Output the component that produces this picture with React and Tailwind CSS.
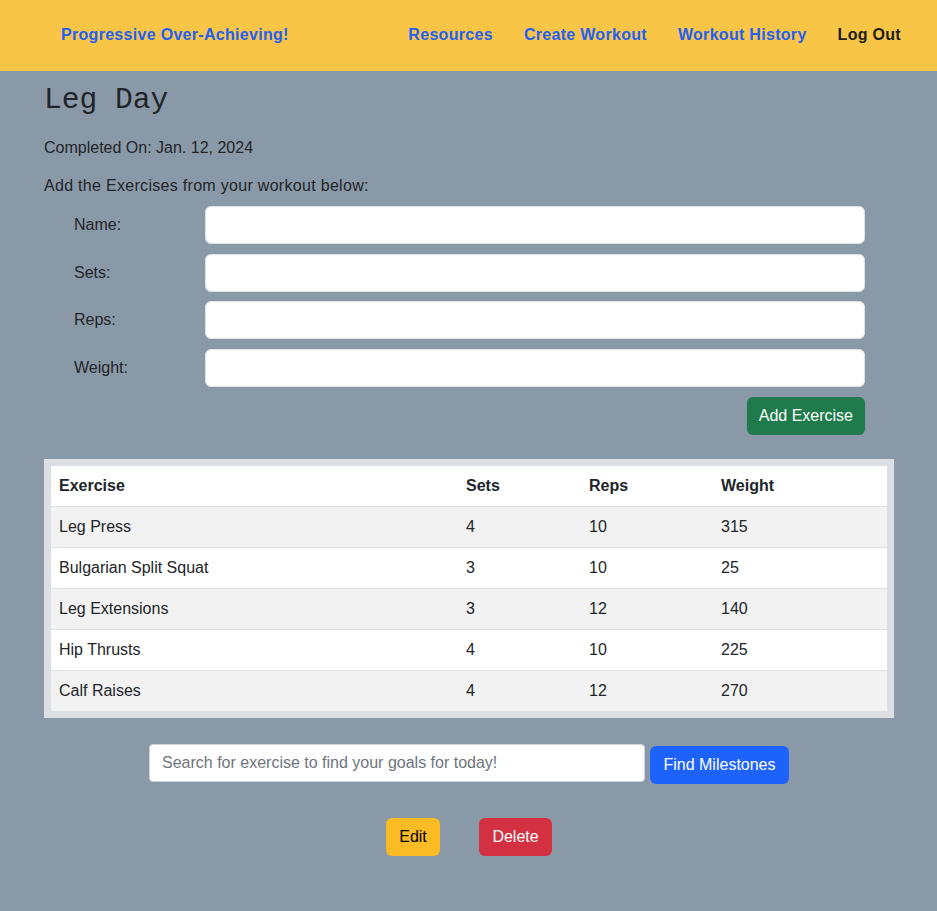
export default function App() {
  const rows = [
    ['Leg Press', '4', '10', '315'],
    ['Bulgarian Split Squat', '3', '10', '25'],
    ['Leg Extensions', '3', '12', '140'],
    ['Hip Thrusts', '4', '10', '225'],
    ['Calf Raises', '4', '12', '270'],
  ];
  const fields = ['Name:', 'Sets:', 'Reps:', 'Weight:'];

  return (
    <div className="min-h-screen bg-[#8a99a8] text-[#212529] font-['Liberation_Sans',Arial,sans-serif] text-base">
      <nav className="h-[71px] bg-[#f9c546] flex items-center pl-[61px] pr-[36px] pb-[2px]">
        <a className="font-bold tracking-[0.3px] text-[#2160f3]">Progressive Over-Achieving!</a>
        <div className="ml-auto flex items-center gap-[31px] font-bold tracking-[0.3px]">
          <a className="text-[#2160f3]">Resources</a>
          <a className="text-[#2160f3]">Create Workout</a>
          <a className="text-[#2160f3]">Workout History</a>
          <a className="text-[#1d1d1f]">Log Out</a>
        </div>
      </nav>

      <main className="px-[44px] pt-[11px] w-[938px]">
        <h2 className="font-['Liberation_Mono','Courier_New',monospace] text-[29.6px] leading-[36px]">Leg Day</h2>
        <p className="mt-[18px] leading-6">Completed On: Jan. 12, 2024</p>
        <p className="mt-[14px] leading-6 tracking-[0.3px]">Add the Exercises from your workout below:</p>

        <div className="mt-2 pl-[30px] pr-[29px] flex flex-col gap-[9.7px]">
          {fields.map((f) => (
            <div key={f} className="flex items-center">
              <label className="w-[131px]">{f}</label>
              <input
                type="text"
                className="flex-1 h-[38px] bg-white rounded-[6px] border border-[#dee2e6] px-3 outline-none"
              />
            </div>
          ))}
          <div className="flex justify-end">
            <button className="h-[38px] px-3 rounded-[6px] bg-[#1f7b4c] text-white">Add Exercise</button>
          </div>
        </div>

        <div className="mt-6 bg-[#dce0e4] p-[7px]">
          <table className="w-full border-collapse bg-white text-left">
            <thead>
              <tr className="h-[41px] border-b border-[#dee2e6]">
                <th className="w-[407px] px-2 font-bold">Exercise</th>
                <th className="w-[123px] px-2 font-bold">Sets</th>
                <th className="w-[132px] px-2 font-bold">Reps</th>
                <th className="px-2 font-bold">Weight</th>
              </tr>
            </thead>
            <tbody>
              {rows.map((r, i) => (
                <tr
                  key={r[0]}
                  className={`${i < rows.length - 1 ? 'h-[41px] border-b border-[#dee2e6]' : 'h-[40px]'} ${i % 2 === 0 ? 'bg-[#f2f2f2]' : 'bg-white'}`}
                >
                  {r.map((c, j) => (
                    <td key={j} className="px-2">{c}</td>
                  ))}
                </tr>
              ))}
            </tbody>
          </table>
        </div>

        <div className="mt-[26px] flex justify-center items-start gap-[5px]">
          <input
            type="text"
            placeholder="Search for exercise to find your goals for today!"
            className="w-[496px] h-[38px] bg-white rounded-[4px] border border-[#ced4da] px-3 placeholder:text-[#6c757d] outline-none"
          />
          <button className="mt-[2px] w-[139px] h-[38px] rounded-[6px] bg-[#1d62fb] text-white">Find Milestones</button>
        </div>

        <div className="mt-[34px] flex justify-center gap-[39px]">
          <button className="w-[54px] h-[38px] rounded-[6px] bg-[#fbbb25] text-black">Edit</button>
          <button className="w-[73px] h-[38px] rounded-[6px] bg-[#d33042] text-white">Delete</button>
        </div>
      </main>
    </div>
  );
}
